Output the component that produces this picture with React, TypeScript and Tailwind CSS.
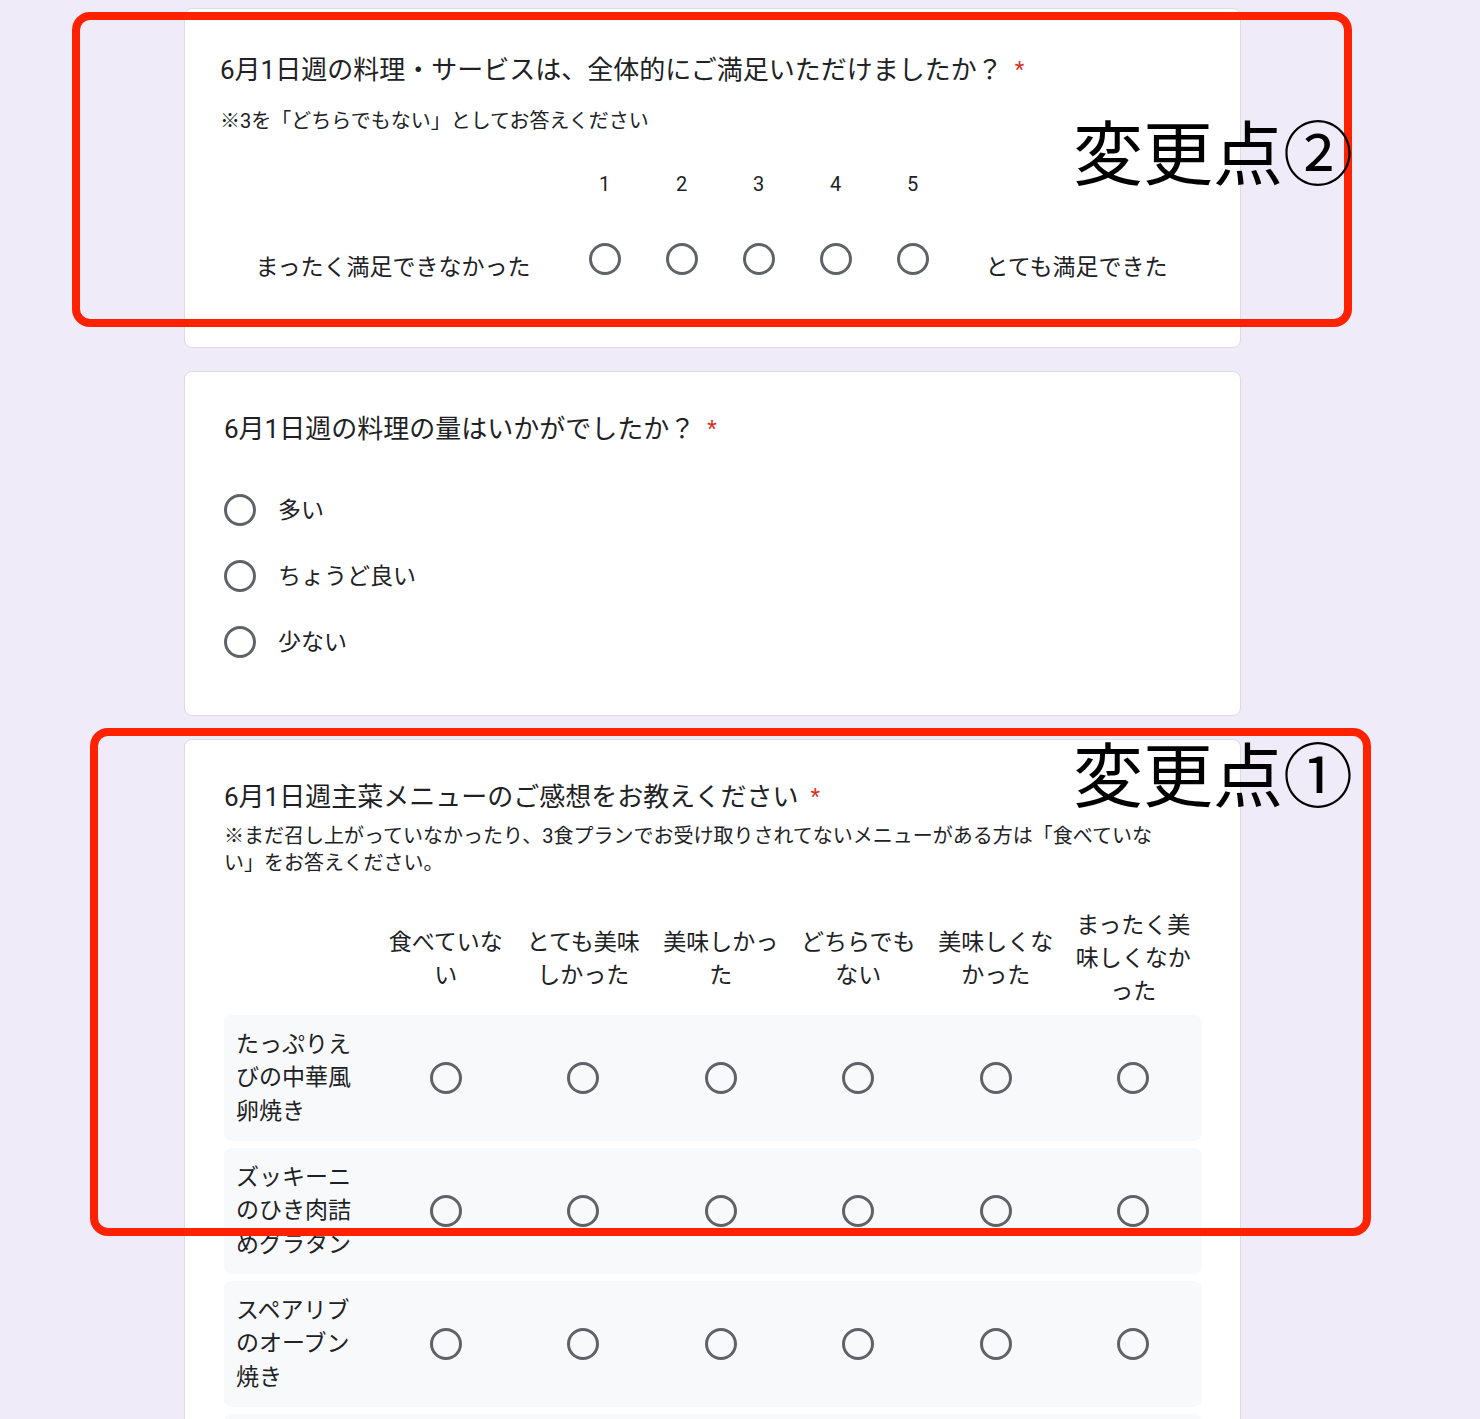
import React from 'react';

type CardProps = { className?: string; children: React.ReactNode };

function Card({ className = '', children }: CardProps) {
  return (
    <section className={`ml-[184px] w-[1057px] bg-white border border-[#dadce0] rounded-lg ${className}`}>
      {children}
    </section>
  );
}

function Radio() {
  return <span className="block w-8 h-8 shrink-0 rounded-full border-[3px] border-[#5f6368]" />;
}

function Required() {
  return <span className="ml-[12px] text-[22px] text-[#d93025] align-top">*</span>;
}

const amountOptions = ['多い', 'ちょうど良い', '少ない'];

const gridCols = [
  '食べていな\nい',
  'とても美味\nしかった',
  '美味しかっ\nた',
  'どちらでも\nない',
  '美味しくな\nかった',
  'まったく美\n味しくなか\nった',
];

// 4行目は画面外で見えないのでラベル無し
const gridRows = [
  'たっぷりえ\nびの中華風\n卵焼き',
  'ズッキーニ\nのひき肉詰\nめグラタン',
  'スペアリブ\nのオーブン\n焼き',
  '',
];

function Annotation({ className, label, labelClass }: { className: string; label: string; labelClass: string }) {
  return (
    <>
      <div className={`pointer-events-none absolute border-[8px] border-[#ff2200] rounded-[18px] ${className}`} />
      <div
        className={`pointer-events-none absolute text-[70px] leading-none font-normal text-black whitespace-nowrap font-['Noto_Sans_CJK_JP',sans-serif] ${labelClass}`}
      >
        {label}
      </div>
    </>
  );
}

export default function App() {
  return (
    <div className="relative min-h-screen bg-[#f0ebf8] pt-[8px] pb-[40px] text-[#202124] font-['Roboto','Noto_Sans_CJK_JP',sans-serif] overflow-hidden">
      {/* 満足度（リニアスケール） */}
      <Card className="pt-[43px] pl-[35px] pr-[38px] pb-[63px]">
        <h2 className="text-[26px] leading-[36px]">
          6月1日週の料理・サービスは、全体的にご満足いただけましたか？<Required />
        </h2>
        <p className="mt-[19px] text-[20px] leading-[28px]">※3を「どちらでもない」としてお答えください</p>
        <div className="mt-[35px] flex items-start">
          <div className="w-[346px] mt-[81px] text-center text-[23px] leading-[33px]">まったく満足できなかった</div>
          {[1, 2, 3, 4, 5].map((n) => (
            <div key={n} className="w-[77px] flex flex-col items-center">
              <span className="text-[20px] leading-[28px]">{n}</span>
              <span className="mt-[45px]">
                <Radio />
              </span>
            </div>
          ))}
          <div className="flex-1 mt-[81px] text-center text-[23px] leading-[33px]">とても満足できた</div>
        </div>
      </Card>

      {/* 量 */}
      <Card className="mt-[23px] pt-[39px] px-[39px] pb-[40px]">
        <h2 className="text-[26px] leading-[36px]">
          6月1日週の料理の量はいかがでしたか？<Required />
        </h2>
        <div className="mt-[30px]">
          {amountOptions.map((o) => (
            <label key={o} className="h-[66px] flex items-center gap-[22px]">
              <Radio />
              <span className="text-[23px] leading-[33px]">{o}</span>
            </label>
          ))}
        </div>
      </Card>

      {/* 主菜メニュー（グリッド） */}
      <Card className="mt-[23px] pt-[39px] pl-[39px] pr-[38px] pb-[40px]">
        <h2 className="text-[26px] leading-[36px]">
          6月1日週主菜メニューのご感想をお教えください<Required />
        </h2>
        <p className="mt-[8px] text-[20px] leading-[27px]">
          ※まだ召し上がっていなかったり、3食プランでお受け取りされてないメニューがある方は「食べていな
          <br />
          い」をお答えください。
        </p>
        <div className="mt-[30px] flex items-center min-h-[103px]">
          <div className="w-[153px] shrink-0" />
          {gridCols.map((c) => (
            <div key={c} className="flex-1 text-center text-[23px] leading-[33px] whitespace-pre-line">
              {c}
            </div>
          ))}
        </div>
        <div className="mt-[5px] flex flex-col gap-[7px]">
          {gridRows.map((r, i) => (
            <div key={i} className="h-[126px] flex items-center bg-[#f8f9fa] rounded-lg">
              <div className="w-[153px] shrink-0 pl-[12px] text-[23px] leading-[33.5px] whitespace-pre-line">{r}</div>
              {gridCols.map((c) => (
                <div key={c} className="flex-1 flex justify-center">
                  <Radio />
                </div>
              ))}
            </div>
          ))}
        </div>
      </Card>

      <Annotation
        className="left-[72px] top-[12px] w-[1280px] h-[315px]"
        label="変更点②"
        labelClass="left-[1073px] top-[115px]"
      />
      <Annotation
        className="left-[90px] top-[728px] w-[1281px] h-[508px]"
        label="変更点①"
        labelClass="left-[1073px] top-[737px]"
      />
    </div>
  );
}
